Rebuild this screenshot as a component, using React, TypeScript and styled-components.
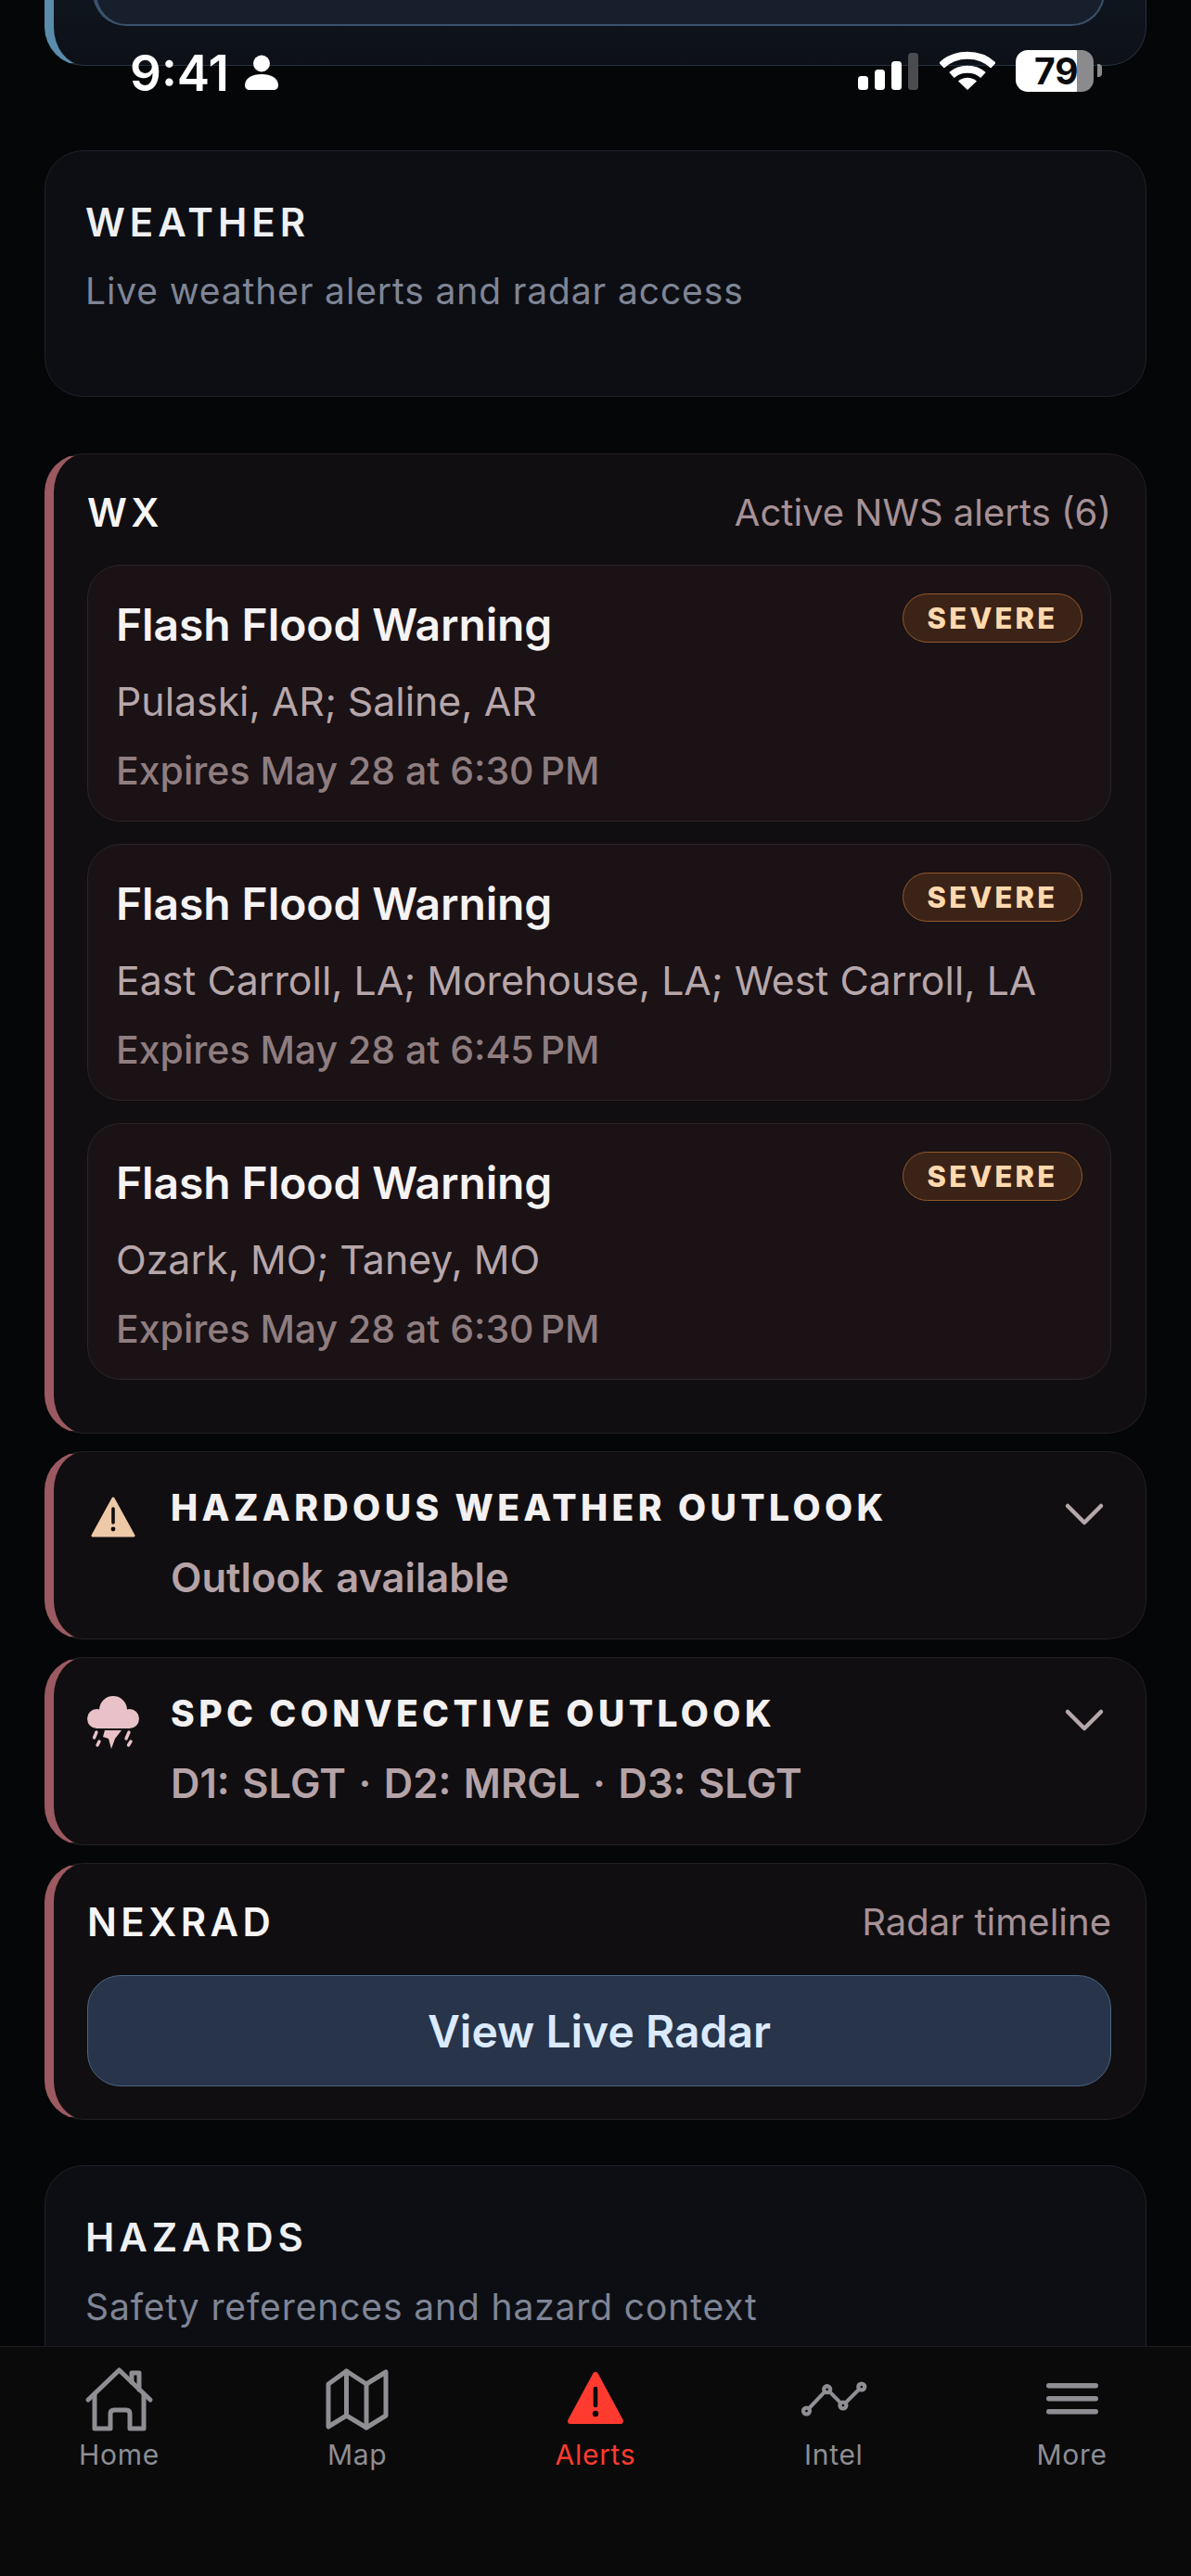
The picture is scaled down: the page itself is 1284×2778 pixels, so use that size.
import React from "react";
import styled, { createGlobalStyle } from "styled-components";

const Global = createGlobalStyle`
  html, body { margin: 0; padding: 0; background: #050608; }
  * { box-sizing: border-box; }
`;

const Page = styled.div`
  position: relative;
  width: 1284px;
  height: 2778px;
  overflow: hidden;
  background: #050608;
  font-family: Inter, "Liberation Sans", sans-serif;
  color: #f2f2f4;
`;

const Content = styled.main`
  display: flex;
  flex-direction: column;
  padding: 0 48px;
`;

const TopCard = styled.section`
  margin-top: -60px;
  height: 131px;
  padding: 0 44px 42px 42px;
  background: linear-gradient(180deg, #101923, #0d1017);
  border: 1px solid #28323f;
  border-left: 10px solid #5a8cab;
  border-radius: 42px;
`;

const TopInner = styled.div`
  height: 100%;
  background: #161f2b;
  border: 2px solid #3b526c;
  border-left-width: 4px;
  border-top: none;
  border-radius: 0 0 36px 36px;
`;

const SectionCard = styled.section<{ $top: number; $bottom: number }>`
  margin-top: ${(p) => p.$top}px;
  padding: 52px 44px ${(p) => p.$bottom}px 43px;
  background: #0c0e13;
  border: 1px solid #1e2229;
  border-radius: 42px;
`;

const SectionTitle = styled.h2`
  margin: 0;
  font-size: 42px;
  line-height: 50px;
  font-weight: 600;
  letter-spacing: 5px;
  color: #eef0f4;
`;

const SectionSub = styled.p<{ $gap: number }>`
  margin: ${(p) => p.$gap}px 0 0;
  font-size: 39px;
  line-height: 48px;
  letter-spacing: 0.87px;
  color: #7f8596;
`;

const AlertCard = styled.section<{ $top: number; $pb: number; $pt: number }>`
  margin-top: ${(p) => p.$top}px;
  padding: ${(p) => p.$pt}px 37px ${(p) => p.$pb}px 36px;
  background: #100e10;
  border: 1px solid #241f23;
  border-left: 10px solid #9b5a60;
  border-radius: 42px;
`;

const HeadRow = styled.div`
  display: flex;
  align-items: center;
  justify-content: space-between;
`;

const CardLabel = styled.h3`
  margin: 0;
  font-size: 42px;
  line-height: 50px;
  font-weight: 600;
  letter-spacing: 4.4px;
  color: #f7f5f6;
`;

const CardMeta = styled.span`
  font-size: 40px;
  line-height: 50px;
  color: #a69197;
`;

const WarningList = styled.div`
  display: flex;
  flex-direction: column;
  gap: 24px;
  margin-top: 31px;
`;

const WarningCard = styled.article`
  height: 277px;
  padding: 30px;
  background: #1a1215;
  border: 1px solid #2c2428;
  border-radius: 36px;
`;

const WarningTop = styled.div`
  display: flex;
  justify-content: space-between;
  align-items: flex-start;
`;

const WarningTitle = styled.h4`
  margin: 5px 0 0;
  font-size: 48px;
  line-height: 58px;
  font-weight: 600;
  letter-spacing: -0.1px;
  color: #f6f3f4;
`;

const Badge = styled.span`
  display: inline-flex;
  align-items: center;
  justify-content: center;
  width: 194px;
  height: 53px;
  background: #3c2317;
  border: 1px solid #94592c;
  border-radius: 27px;
  font-size: 31px;
  font-weight: 800;
  letter-spacing: 3.2px;
  color: #ffd9ae;
`;

const Areas = styled.p`
  margin: 29px 0 0;
  font-size: 42.8px;
  line-height: 50px;
  color: #b7a7ab;
`;

const Expires = styled.p`
  margin: 26px 0 0;
  font-size: 41px;
  line-height: 46px;
  font-weight: 500;
  color: #8f7d80;
`;

const OutlookRow = styled.div`
  display: flex;
  align-items: flex-start;
`;

const IconSlot = styled.div`
  flex: none;
  display: flex;
  align-items: center;
  justify-content: center;
  width: 56px;
  height: 68px;
  margin-right: 34px;
`;

const OutlookBody = styled.div`
  flex: 1;
`;

const OutlookTitle = styled.h3`
  margin: 0;
  font-size: 39px;
  line-height: 48px;
  font-weight: 800;
  letter-spacing: 4.4px;
  color: #f3f0f1;
`;

const OutlookValue = styled.p`
  margin: 26px 0 0;
  font-size: 43.5px;
  line-height: 50px;
  font-weight: 600;
  word-spacing: 2.6px;
  color: #b5a3a7;
`;

const Chevron = styled.svg`
  flex: none;
  width: 44px;
  height: 26px;
  margin: 18px 7px 0 0;
`;

const RadarButton = styled.button`
  display: block;
  width: 100%;
  height: 120px;
  margin-top: 32px;
  background: #27344a;
  border: 1px solid #4a6782;
  border-radius: 36px;
  font-family: inherit;
  font-size: 48px;
  font-weight: 600;
  color: #dbeafe;
`;

const StatusBar = styled.div`
  position: absolute;
  top: 53px;
  left: 140px;
  right: 96px;
  height: 46px;
  display: flex;
  align-items: center;
  color: #fff;
`;

const Clock = styled.span`
  font-size: 53px;
  line-height: 46px;
  font-weight: 600;
  padding-top: 5px;
`;

const PersonIcon = styled.svg`
  width: 36px;
  height: 38px;
  margin: 4px 0 0 17px;
`;

const StatusRight = styled.div`
  margin-left: auto;
  display: flex;
  align-items: center;
`;

const Signal = styled.div`
  display: flex;
  align-items: flex-end;
  gap: 7px;
  height: 40px;
  margin: 2px 23px 0 0;
`;

const SignalBar = styled.i<{ $h: number; $off?: boolean }>`
  display: block;
  width: 11px;
  height: ${(p) => p.$h}px;
  border-radius: 3.5px;
  background: ${(p) => (p.$off ? "#4a4c50" : "#fff")};
`;

const WifiIcon = styled.svg`
  width: 60px;
  height: 42px;
  margin-right: 22px;
`;

const Battery = styled.div`
  position: relative;
  width: 84px;
  height: 45px;
  border-radius: 13px;
  overflow: hidden;
  background: linear-gradient(90deg, #fff 0, #fff 66px, #8b8b8d 66px);
  color: #0b0b0d;
  font-size: 39px;
  line-height: 45px;
  font-weight: 700;
  padding-left: 20px;
`;

const BatteryNub = styled.i`
  display: block;
  width: 5px;
  height: 14px;
  margin-left: 4px;
  border-radius: 0 4px 4px 0;
  background: #8b8b8d;
`;

const TabBar = styled.nav`
  position: absolute;
  left: 0;
  right: 0;
  bottom: 0;
  height: 248px;
  display: grid;
  grid-template-columns: repeat(5, 1fr);
  background: #0a0a0b;
  border-top: 1px solid #1d1d20;
`;

const Tab = styled.div<{ $active?: boolean }>`
  display: flex;
  flex-direction: column;
  align-items: center;
  padding-top: 20px;
  color: ${(p) => (p.$active ? "#ff3b30" : "#8e8e93")};
`;

const TabIcon = styled.div`
  height: 72px;
  display: flex;
  align-items: center;
  justify-content: center;
`;

const TabLabel = styled.span`
  margin-top: 6px;
  font-size: 30px;
  line-height: 36px;
  letter-spacing: 0.7px;
`;

const warnings = [
  { areas: "Pulaski, AR; Saline, AR", exp: "Expires May 28 at 6:30\u202fPM" },
  { areas: "East Carroll, LA; Morehouse, LA; West Carroll, LA", exp: "Expires May 28 at 6:45\u202fPM" },
  { areas: "Ozark, MO; Taney, MO", exp: "Expires May 28 at 6:30\u202fPM" },
];

const Down = () => (
  <Chevron viewBox="0 0 44 26" fill="none" stroke="#b5a8aa" strokeWidth="4.5" strokeLinecap="round" strokeLinejoin="round">
    <path d="M4 4 L22 22 L40 4" />
  </Chevron>
);

const WarnIcon = () => (
  <svg width="48" height="46" viewBox="0 0 48 46">
    <path d="M24 3 L46 43 H2 Z" fill="#eec9a8" stroke="#eec9a8" strokeWidth="3" strokeLinejoin="round" />
    <path d="M24 14 V29" stroke="#100e10" strokeWidth="3.6" strokeLinecap="round" />
    <circle cx="24" cy="36" r="2.4" fill="#100e10" />
  </svg>
);

const StormIcon = () => (
  <svg width="56" height="58" viewBox="0 0 56 58" fill="#e8c2c8">
    <circle cx="28" cy="15" r="15" />
    <circle cx="10.5" cy="24.5" r="10.5" />
    <circle cx="45.5" cy="24.5" r="10.5" />
    <rect x="10" y="20" width="36" height="15" />
    <polygon points="19,37 37,37 30,46 26,57 23,46 17,44" />
    <path d="M10 39 L7.5 45 M13 49 L11 53 M45 39 L42 46 M47 49 L44.5 53" stroke="#e8c2c8" strokeWidth="3.4" strokeLinecap="round" />
  </svg>
);

const HomeIcon = () => (
  <svg width="80" height="72" viewBox="0 0 80 72" fill="none" stroke="currentColor" strokeWidth="5" strokeLinecap="round" strokeLinejoin="round">
    <path d="M7 37 L40.5 5 L74 37" />
    <path d="M14 31 V68 H31 V52 Q31 48 35 48 H48 Q52 48 52 52 V68 H67 V31" />
    <path d="M54 18 V8 H62 V26" />
  </svg>
);

const MapIcon = () => (
  <svg width="68" height="72" viewBox="0 0 68 72" fill="none" stroke="currentColor" strokeWidth="5" strokeLinecap="round" strokeLinejoin="round">
    <path d="M3 20 L22.5 6 L44 20 L65 7 V54 L44 67 L22.5 54 L3 66 Z" />
    <path d="M22.5 6 V54 M44 20 V67" />
  </svg>
);

const AlertIcon = () => (
  <svg width="62" height="60" viewBox="0 0 62 60">
    <path d="M31 4 L58 54 H4 Z" fill="#ff3b30" stroke="#ff3b30" strokeWidth="6" strokeLinejoin="round" />
    <path d="M31 19 V37" stroke="#0a0a0b" strokeWidth="4.6" strokeLinecap="round" />
    <circle cx="31" cy="46" r="3.2" fill="#0a0a0b" />
  </svg>
);

const IntelIcon = () => {
  const pts: [number, number][] = [[8.5, 35], [30.7, 11.7], [47.9, 29], [67.8, 9]];
  return (
    <svg width="76" height="44" viewBox="0 0 76 44">
      <polyline points={pts.map((p) => p.join(",")).join(" ")} fill="none" stroke="currentColor" strokeWidth="4" />
      {pts.map(([x, y]) => (
        <g key={x}>
          <circle cx={x} cy={y} r="5.6" fill="currentColor" />
          <circle cx={x} cy={y} r="1.3" fill="#0a0a0b" />
        </g>
      ))}
    </svg>
  );
};

const MoreIcon = () => (
  <svg width="56" height="34" viewBox="0 0 56 34" fill="currentColor">
    <rect width="56" height="5.5" rx="2.7" />
    <rect y="14" width="56" height="5.5" rx="2.7" />
    <rect y="28" width="56" height="5.5" rx="2.7" />
  </svg>
);

const tabs = [
  { label: "Home", icon: <HomeIcon /> },
  { label: "Map", icon: <MapIcon /> },
  { label: "Alerts", icon: <AlertIcon />, active: true },
  { label: "Intel", icon: <IntelIcon /> },
  { label: "More", icon: <MoreIcon /> },
];

export default function App() {
  return (
    <Page>
      <Global />
      <Content>
        <TopCard>
          <TopInner />
        </TopCard>

        <SectionCard $top={91} $bottom={89}>
          <SectionTitle>WEATHER</SectionTitle>
          <SectionSub $gap={25}>Live weather alerts and radar access</SectionSub>
        </SectionCard>

        <AlertCard $top={61} $pt={38} $pb={57}>
          <HeadRow>
            <CardLabel>WX</CardLabel>
            <CardMeta>Active NWS alerts (6)</CardMeta>
          </HeadRow>
          <WarningList>
            {warnings.map((w) => (
              <WarningCard key={w.areas}>
                <WarningTop>
                  <WarningTitle>Flash Flood Warning</WarningTitle>
                  <Badge>SEVERE</Badge>
                </WarningTop>
                <Areas>{w.areas}</Areas>
                <Expires>{w.exp}</Expires>
              </WarningCard>
            ))}
          </WarningList>
        </AlertCard>

        <AlertCard $top={19} $pt={36} $pb={41}>
          <OutlookRow>
            <IconSlot><WarnIcon /></IconSlot>
            <OutlookBody>
              <OutlookTitle>HAZARDOUS WEATHER OUTLOOK</OutlookTitle>
              <OutlookValue>Outlook available</OutlookValue>
            </OutlookBody>
            <Down />
          </OutlookRow>
        </AlertCard>

        <AlertCard $top={19} $pt={36} $pb={41}>
          <OutlookRow>
            <IconSlot><StormIcon /></IconSlot>
            <OutlookBody>
              <OutlookTitle>SPC CONVECTIVE OUTLOOK</OutlookTitle>
              <OutlookValue>D1: SLGT · D2: MRGL · D3: SLGT</OutlookValue>
            </OutlookBody>
            <Down />
          </OutlookRow>
        </AlertCard>

        <AlertCard $top={19} $pt={38} $pb={35}>
          <HeadRow>
            <CardLabel>NEXRAD</CardLabel>
            <CardMeta>Radar timeline</CardMeta>
          </HeadRow>
          <RadarButton>View Live Radar</RadarButton>
        </AlertCard>

        <SectionCard $top={49} $bottom={89}>
          <SectionTitle>HAZARDS</SectionTitle>
          <SectionSub $gap={26}>Safety references and hazard context</SectionSub>
        </SectionCard>
      </Content>

      <StatusBar>
        <Clock>9:41</Clock>
        <PersonIcon viewBox="0 0 36 38" fill="#fff">
          <circle cx="18" cy="9.5" r="9" />
          <path d="M0 33 C0 25 8 21 18 21 C28 21 36 25 36 33 C36 36 34 38 31 38 H5 C2 38 0 36 0 33 Z" />
        </PersonIcon>
        <StatusRight>
          <Signal>
            <SignalBar $h={15} />
            <SignalBar $h={22} />
            <SignalBar $h={31} />
            <SignalBar $h={40} $off />
          </Signal>
          <WifiIcon viewBox="0 0 60 42" fill="none" stroke="#fff" strokeWidth="8">
            <path d="M2 15.500 C17 1 43 1 58 15.500" />
            <path d="M13 26 C22 17.500 38 17.500 47 26" />
            <path d="M30 42 L20 32.500 C26 27.500 34 27.500 40 32.500 Z" fill="#fff" stroke="none" />
          </WifiIcon>
          <Battery>79</Battery>
          <BatteryNub />
        </StatusRight>
      </StatusBar>

      <TabBar>
        {tabs.map((t) => (
          <Tab key={t.label} $active={t.active}>
            <TabIcon>{t.icon}</TabIcon>
            <TabLabel>{t.label}</TabLabel>
          </Tab>
        ))}
      </TabBar>
    </Page>
  );
}
